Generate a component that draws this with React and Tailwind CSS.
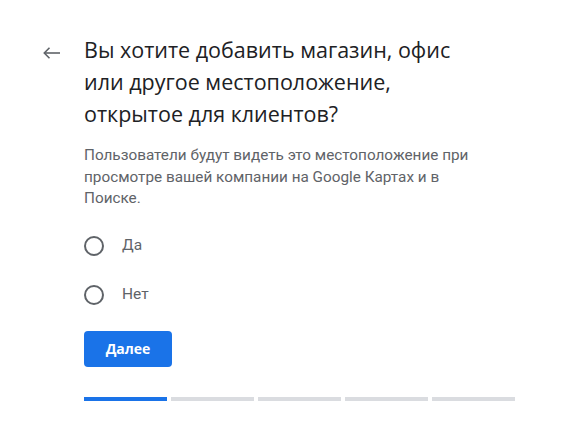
import React, { useState } from "react";

export default function App() {
  const [choice, setChoice] = useState(null);
  const options = ["Да", "Нет"];

  return (
    <div className="w-[570px] h-[445px] bg-white overflow-hidden font-['Roboto',sans-serif]">
      <div className="flex pt-[34px] pl-[40px]">
        {/* стрелка назад */}
        <div className="w-[44px] pt-[7px]">
          <svg width="24" height="24" viewBox="0 0 24 24" fill="none" stroke="#5f6368" strokeWidth="1.6">
            <path d="M4.5 12H20" />
            <path d="M9.5 6.8L4.3 12l5.2 5.2" />
          </svg>
        </div>

        <div className="w-[431px] flex flex-col">
          <h1 className="text-[21.5px] leading-[32px] text-[#202124] font-['Open_Sans',sans-serif]">
            Вы хотите добавить магазин, офис
            <br />
            или другое местоположение,
            <br />
            открытое для клиентов?
          </h1>

          <p className="mt-[15px] text-[15.3px] leading-[21.5px] text-[#5f6368] w-[395px]">
            Пользователи будут видеть это местоположение при просмотре вашей компании на Google Картах и в Поиске.
          </p>

          <div className="mt-[12px] flex flex-col">
            {options.map((o) => (
              <label key={o} className="h-[49px] flex items-center cursor-pointer">
                <span
                  onClick={() => setChoice(o)}
                  className="w-[20px] h-[20px] rounded-full border-2 border-[#5f6368] flex items-center justify-center"
                >
                  {choice === o && <span className="w-[10px] h-[10px] rounded-full bg-[#1a73e8]" />}
                </span>
                <span className="ml-[18px] text-[15.5px] text-[#5f6368]">{o}</span>
              </label>
            ))}
          </div>

          <button className="mt-[11px] w-[88px] h-[36px] rounded-[4px] bg-[#1a73e8] text-white text-[14px] font-bold font-['Open_Sans',sans-serif]">
            Далее
          </button>

          {/* прогресс */}
          <div className="mt-[30px] flex gap-[4px]">
            <div className="flex-1 h-[4px] bg-[#1a73e8]" />
            <div className="flex-1 h-[4px] bg-[#dadce0]" />
            <div className="flex-1 h-[4px] bg-[#dadce0]" />
            <div className="flex-1 h-[4px] bg-[#dadce0]" />
            <div className="flex-1 h-[4px] bg-[#dadce0]" />
          </div>
        </div>
      </div>
    </div>
  );
}
